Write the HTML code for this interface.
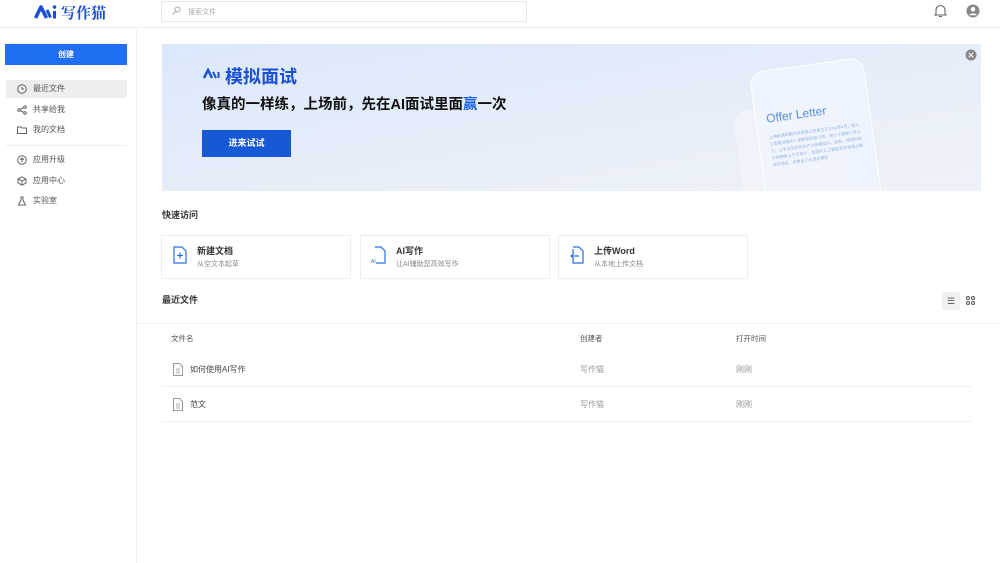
<!DOCTYPE html>
<html><head><meta charset="utf-8"><style>
*{margin:0;padding:0;box-sizing:border-box}
body{width:1000px;height:563px;overflow:hidden;background:#fff;font-family:"Liberation Sans","Noto Sans CJK SC",sans-serif;color:#333;position:relative}
.abs{position:absolute}
.hdr{left:0;top:0;width:1000px;height:28px;border-bottom:1px solid #eee}
.side{left:0;top:29px;width:137px;height:534px;border-right:1px solid #eee}
.nav{position:absolute;left:6px;width:121px;height:18px;font-size:8px;color:#555;line-height:18px;padding-left:27px}
.nav svg{position:absolute;left:11px;top:4px}
.card{position:absolute;top:235px;width:190px;height:44px;border:1px solid #eee}
.card .t{position:absolute;left:35px;top:8px;font-size:9px;font-weight:bold;color:#333}
.card .s{position:absolute;left:35px;top:23px;font-size:7px;color:#888}
.card svg{position:absolute;left:10px;top:10px}
.row{position:absolute;left:162px;width:810px;height:35px;border-bottom:1px solid #f0f0f0;font-size:8px;line-height:35px}
</style></head><body>
<div class="abs hdr">
  <svg class="abs" style="left:34px;top:4px" width="24" height="15" viewBox="0 0 24 15"><path d="M1.5 14 L7 3 L12.5 14" stroke="#1a4fd6" stroke-width="3.6" fill="none" stroke-linejoin="round"/><path d="M13 6 L16.5 13.5" stroke="#1a4fd6" stroke-width="3" fill="none"/><path d="M20.5 7 V14.5" stroke="#1a4fd6" stroke-width="3"/><circle cx="20.5" cy="3" r="1.8" fill="#1a4fd6"/></svg>
  <div class="abs" style="left:61px;top:2px;font-size:15px;font-weight:bold;color:#1a4fd6;font-family:'Noto Serif CJK SC',serif">写作猫</div>
  <div class="abs" style="left:161px;top:1px;width:366px;height:21px;border:1px solid #e6e6e6;border-radius:2px"></div>
  <svg class="abs" style="left:171px;top:6px" width="10" height="10"><circle cx="6.5" cy="3.5" r="2.5" fill="none" stroke="#aaa"/><path d="M4.7 5.3L1.5 8.5" stroke="#aaa"/></svg>
  <div class="abs" style="left:188px;top:7px;font-size:7px;color:#aaa">搜索文件</div>
  <svg class="abs" style="left:934px;top:4px" width="13" height="14" viewBox="0 0 13 14"><path d="M2 10 V6 a4.5 4.5 0 0 1 9 0 V10 L12 11 H1 Z" fill="none" stroke="#666" stroke-width="1.1"/><path d="M5 12.5 h3" stroke="#666"/></svg>
  <svg class="abs" style="left:966px;top:4px" width="14" height="14" viewBox="0 0 14 14"><circle cx="7" cy="7" r="6.5" fill="#888"/><circle cx="7" cy="5.3" r="2.3" fill="#fff"/><path d="M2.8 11.2 a5 4 0 0 1 8.4 0" fill="#fff"/></svg>
</div>
<div class="abs side">
  <div class="abs" style="left:5px;top:15px;width:122px;height:21px;background:#1f6ff0;color:#fff;font-size:8px;font-weight:bold;text-align:center;line-height:21px">创建</div>
  <div class="nav" style="top:51px;background:#eee;border-radius:2px"><svg width="10" height="10"><circle cx="5" cy="5" r="4.3" fill="none" stroke="#666"/><path d="M5 2.5V5H7" stroke="#666" fill="none"/></svg>最近文件</div>
  <div class="nav" style="top:72px"><svg width="10" height="10"><circle cx="2" cy="5" r="1.3" fill="none" stroke="#666"/><circle cx="8" cy="2" r="1.3" fill="none" stroke="#666"/><circle cx="8" cy="8" r="1.3" fill="none" stroke="#666"/><path d="M3 4.5L7 2.5M3 5.5L7 7.5" stroke="#666"/></svg>共享给我</div>
  <div class="nav" style="top:92px"><svg width="10" height="10"><path d="M0.5 2H4L5 3H9.5V8.5H0.5Z" fill="none" stroke="#666"/></svg>我的文档</div>
  <div class="abs" style="left:6px;top:116px;width:121px;height:1px;background:#eee"></div>
  <div class="nav" style="top:122px"><svg width="10" height="10"><circle cx="5" cy="5" r="4.3" fill="none" stroke="#666"/><path d="M5 7.5V3M3 5L5 3L7 5" stroke="#666" fill="none"/></svg>应用升级</div>
  <div class="nav" style="top:143px"><svg width="10" height="10"><path d="M5 0.8L9 3V7L5 9.2L1 7V3Z M1 3L5 5L9 3M5 5V9" fill="none" stroke="#666"/></svg>应用中心</div>
  <div class="nav" style="top:163px"><svg width="10" height="10"><path d="M3.5 1H6.5M4 1V4L1.5 9H8.5L6 4V1" fill="none" stroke="#666"/></svg>实验室</div>
</div>
<div class="abs" style="left:162px;top:44px;width:819px;height:147px;overflow:hidden;background:linear-gradient(170deg,#dbe8fb 0%,#e8eef8 60%,#eef2f8 100%)">
  <div class="abs" style="left:578px;top:60px;width:110px;height:120px;border-radius:12px;background:rgba(255,255,255,.3);transform:rotate(-8deg)"></div>
  <div class="abs" style="left:598px;top:20px;width:115px;height:170px;border-radius:14px;background:rgba(238,244,253,.9);transform:rotate(-8deg);overflow:hidden;border:1px solid #fff">
    <div style="margin:40px 0 0 10px;font-size:12px;color:#5b8fe0">Offer Letter</div>
    <div style="margin:8px 8px 0 10px;font-size:4px;line-height:7px;color:#9ab4dc">上海秘塔网络科技有限公司成立于2018年4月，是人工智能领域的一家新锐科技公司，致力于赋能个体人力，让专业信息的生产力获得提升。目前，秘塔科技已经拥有上千万用户，在国内人工智能写作领域占据领先地位，并推出了大语言模型</div>
  </div>
  <svg class="abs" style="left:803px;top:5px" width="12" height="12"><circle cx="6" cy="6" r="5.5" fill="#888"/><path d="M3.8 3.8L8.2 8.2M8.2 3.8L3.8 8.2" stroke="#eee" stroke-width="1.2"/></svg>
  <svg class="abs" style="left:41px;top:24px" width="18" height="11" viewBox="0 0 18 11"><path d="M1 10L5 2L9 10" stroke="#1a4fd6" stroke-width="2.5" fill="none"/><path d="M10 4L13 10M15.5 4V10" stroke="#1a4fd6" stroke-width="2"/></svg>
  <div class="abs" style="left:63px;top:19px;font-size:18px;font-weight:bold;color:#1a4fd6">模拟面试</div>
  <div class="abs" style="left:40px;top:49px;font-size:14.5px;font-weight:bold;color:#111">像真的一样练，上场前，先在AI面试里面<span style="color:#1a5fe0">赢</span>一次</div>
  <div class="abs" style="left:40px;top:86px;width:89px;height:27px;background:#1658d6;color:#fff;font-size:9px;font-weight:bold;text-align:center;line-height:27px">进来试试</div>
</div>
<div class="abs" style="left:162px;top:208px;font-size:9px;font-weight:bold">快速访问</div>
<div class="card" style="left:161px"><svg width="16" height="18"><path d="M2 1H10L14 5V17H2Z" fill="none" stroke="#2a6ee8" stroke-width="1.2"/><path d="M8 6.5V12.5M5 9.5H11" stroke="#2a6ee8" stroke-width="1.2"/></svg><div class="t">新建文档</div><div class="s">从空文本起草</div></div>
<div class="card" style="left:360px"><svg width="16" height="18"><path d="M4 1H10L14 5V17H5" fill="none" stroke="#2a6ee8" stroke-width="1.2"/><text x="0" y="17" font-size="5" fill="#2a6ee8">AI</text></svg><div class="t">AI写作</div><div class="s">让AI辅助您高效写作</div></div>
<div class="card" style="left:558px"><svg width="16" height="18"><path d="M4 1H10L14 5V17H4V13M4 7V3" fill="none" stroke="#2a6ee8" stroke-width="1.2"/><path d="M10 10H2M5 7L2 10L5 13" fill="none" stroke="#2a6ee8" stroke-width="1.2"/></svg><div class="t">上传Word</div><div class="s">从本地上传文档</div></div>
<div class="abs" style="left:162px;top:293px;font-size:9px;font-weight:bold">最近文件</div>
<div class="abs" style="left:942px;top:292px;width:18px;height:18px;background:#f0f0f0;border-radius:2px;font-size:9px;color:#555;text-align:center;line-height:18px">☰</div>
<svg class="abs" style="left:966px;top:296px" width="9" height="9"><circle cx="2" cy="2" r="1.5" fill="none" stroke="#555"/><circle cx="7" cy="2" r="1.5" fill="none" stroke="#555"/><circle cx="2" cy="7" r="1.5" fill="none" stroke="#555"/><circle cx="7" cy="7" r="1.5" fill="none" stroke="#555"/></svg>
<div class="abs" style="left:137px;top:323px;width:863px;height:1px;background:#f2f2f2"></div>
<div class="abs" style="left:171px;top:333px;font-size:7.5px;color:#555">文件名</div>
<div class="abs" style="left:580px;top:333px;font-size:7.5px;color:#555">创建者</div>
<div class="abs" style="left:736px;top:333px;font-size:7.5px;color:#555">打开时间</div>
<div class="row" style="top:352px"><svg class="abs" style="left:11px;top:11px" width="10" height="13"><path d="M0.5 0.5H6.5L9.5 3.5V12.5H0.5Z" fill="none" stroke="#999"/><path d="M3 6H7M3 8H7M3 10H7" stroke="#999" stroke-width=".7"/></svg><span class="abs" style="left:28px;color:#444">如何使用AI写作</span><span class="abs" style="left:418px;color:#999">写作猫</span><span class="abs" style="left:574px;color:#999">刚刚</span></div>
<div class="row" style="top:387px"><svg class="abs" style="left:11px;top:11px" width="10" height="13"><path d="M0.5 0.5H6.5L9.5 3.5V12.5H0.5Z" fill="none" stroke="#999"/><path d="M3 6H7M3 8H7M3 10H7" stroke="#999" stroke-width=".7"/></svg><span class="abs" style="left:28px;color:#444">范文</span><span class="abs" style="left:418px;color:#999">写作猫</span><span class="abs" style="left:574px;color:#999">刚刚</span></div>
</body></html>
